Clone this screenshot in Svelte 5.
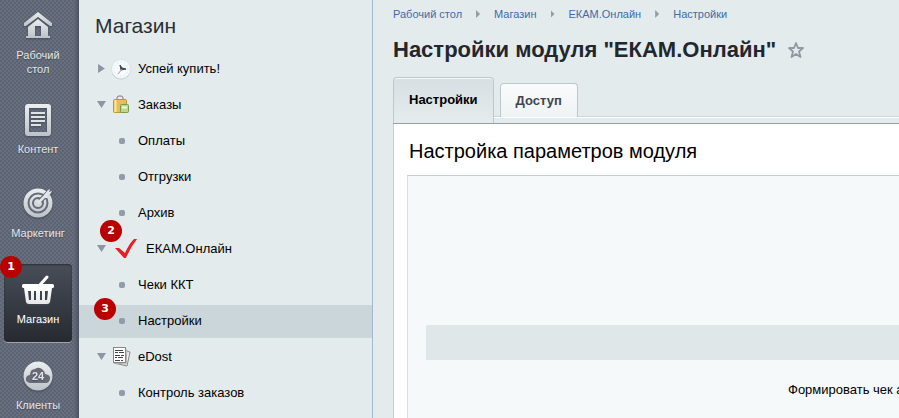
<script lang="ts">
  type NavItem = { label: string; icon: string; badge?: number; tall?: boolean };
  type TreeItem = { label: string; icon?: string; open?: boolean; active?: boolean; badge?: number };

  const nav: NavItem[] = [
    { label: 'Рабочий стол', icon: 'home', tall: true },
    { label: 'Контент', icon: 'content' },
    { label: 'Маркетинг', icon: 'target' },
    { label: 'Магазин', icon: 'basket', badge: 1 },
    { label: 'Клиенты', icon: 'cloud' }
  ];

  const tree: TreeItem[] = [
    { label: 'Успей купить!', icon: 'clock', open: false },
    { label: 'Заказы', icon: 'bags', open: true },
    { label: 'Оплаты' },
    { label: 'Отгрузки' },
    { label: 'Архив' },
    { label: 'ЕКАМ.Онлайн', icon: 'check', open: true, badge: 2 },
    { label: 'Чеки ККТ' },
    { label: 'Настройки', active: true, badge: 3 },
    { label: 'eDost', icon: 'papers', open: true },
    { label: 'Контроль заказов' }
  ];

  const crumbs = ['Рабочий стол', 'Магазин', 'ЕКАМ.Онлайн', 'Настройки'];
  const tabs = ['Настройки', 'Доступ'];

  let section = $state('Магазин');
  let tab = $state('Настройки');
</script>

<div class="page">
  <nav class="rail">
    {#each nav as item}
      <button
        type="button"
        class="rail-item"
        class:tall={item.tall}
        class:active={section === item.label}
        onclick={() => (section = item.label)}
      >
        <svg class="rail-icon" viewBox="0 0 36 36" aria-hidden="true">
          <defs>
            <linearGradient id="metal-{item.icon}" x1="0" y1="0" x2="0" y2="1">
              <stop offset="0" stop-color={item.icon === 'basket' ? '#ffffff' : '#eceff0'} />
              <stop offset="1" stop-color={item.icon === 'basket' ? '#e4e6e8' : '#bcc2c7'} />
            </linearGradient>
          </defs>
          {#if item.icon === 'home'}
            <g fill="url(#metal-home)">
              <path d="M18 4 L32 15 V18 H30 L18 9 L6 18 H4 V15 Z" />
              <path d="M18 11 L28 19 V28 H30 V30 H6 V28 H8 V19 Z M15 18 V28 H21 V18 Z" fill-rule="evenodd" />
            </g>
          {:else if item.icon === 'content'}
            <path
              fill="url(#metal-content)"
              fill-rule="evenodd"
              d="M8 2 H28 Q31 2 31 5 V31 Q31 34 28 34 H8 Q5 34 5 31 V5 Q5 2 8 2 Z M9 6 V30 H27 V6 Z"
            />
            <path d="M11 11 H25 M11 15 H25 M11 19 H25 M11 23 H21" stroke="#dfe3e5" stroke-width="2" />
          {:else if item.icon === 'target'}
            <circle cx="18" cy="17" r="14.500" fill="url(#metal-target)" />
            <g fill="none" stroke="#656b79" stroke-width="2">
              <circle cx="18" cy="17" r="9.500" />
              <circle cx="18" cy="17" r="5" />
            </g>
            <path d="M20 15 L31 4" stroke="#656b79" stroke-width="5" />
            <path d="M18 17 L29 6" stroke="#e2e5e7" stroke-width="2.500" />
            <path d="M24 9 L28 4 L30 3 L29 6 L32 5 L31 7 L27 12 L24 12 Z" fill="#e2e5e7" />
          {:else if item.icon === 'basket'}
            <path d="M19 14 L27 5" stroke="#fff" stroke-width="3" stroke-linecap="round" />
            <rect x="2" y="12" width="32" height="4" rx="1.500" fill="#fff" />
            <path
              fill="url(#metal-basket)"
              fill-rule="evenodd"
              d="M4 16 H32 L30 30 Q29.500 32 27 32 H9 Q6.500 32 6 30 Z M8 19 L9 28 H11 V19 Z M14 19 V28 H16 V19 Z M20 19 V28 H22 V19 Z M25 19 V28 H27 L28 19 Z"
            />
          {:else}
            <circle cx="18" cy="18" r="14.500" fill="url(#metal-cloud)" />
            <path
              d="M10 25 Q5 24 6 20 Q7 17 10 17 Q10 11 15 11 Q19 8 23 12 Q25 14 25 16 Q31 17 30 21 Q29 25 26 25 Z"
              fill="#666b77"
            />
            <text x="18" y="22" text-anchor="middle" class="cloud-text">24</text>
          {/if}
        </svg>
        <span class="rail-label">{item.label}</span>
        {#if item.badge}<span class="badge rail-badge">{item.badge}</span>{/if}
      </button>
    {/each}
  </nav>

  <aside class="menu">
    <h2>Магазин</h2>
    <ul>
      {#each tree as item}
        <li class:active={item.active} class:check={item.icon === 'check'}>
          {#if item.icon}
            <button type="button" class="toggle" class:open={item.open} aria-label={item.label}></button>
            <svg class="tree-icon" viewBox="0 0 24 24" aria-hidden="true">
              {#if item.icon === 'clock'}
                <circle cx="12" cy="13" r="9.500" fill="#b5cbd5" />
                <circle cx="12" cy="12" r="9.500" fill="#f8fbfc" stroke="#d8e4e9" />
                <circle cx="12" cy="12" r="7" fill="none" stroke="#c8d7df" stroke-dasharray="1 2.600" />
                <path d="M17 12 L12 13 L11 8 L13 11 Z" fill="#34464f" stroke="#34464f" />
                <path d="M13 12 L9 17" stroke="#be8d8d" />
              {:else if item.icon === 'bags'}
                <path d="M8 8 V5 Q8 3 10 3 H12 Q14 3 14 5 V8" fill="none" stroke="#84796a" />
                <rect x="4.500" y="6.500" width="13" height="13" rx="1" fill="#e9bd56" stroke="#c4943a" />
                <path d="M6.500 7 V19" stroke="#f9e6a6" stroke-width="2" />
                <rect x="11.500" y="11.500" width="8" height="8" rx="1" fill="#bed68b" stroke="#779a4d" />
                <path d="M13 14.500 H18" stroke="#f3f8df" stroke-width="2" />
              {:else if item.icon === 'check'}
                <path d="M1 11 H5 L11 16 Q15 7 20 2 H23 Q16 11 12 21 H10 Z" fill="#ed1c24" />
              {:else}
                <path d="M8 4 L21 7 L18 21 L5 18 Z" fill="#f2f2f2" stroke="#888" />
                <path d="M7 3 L18 5 L17 19 L5 18 Z" fill="#fff" stroke="#aaa" />
                <rect x="4.500" y="2.500" width="12" height="15" fill="#fff" stroke="#888" />
                <path
                  d="M6 5.500 H14 M6 7.500 H9 M10 7.500 H15 M6 10.500 H11 M12 10.500 H15 M6 12.500 H8 M9 12.500 H14 M6 15.500 H11 M12 15.500 H14"
                  stroke="#444"
                />
              {/if}
            </svg>
          {:else}
            <span class="dot"></span>
          {/if}
          <a href="#menu">{item.label}</a>
          {#if item.badge}<span class="badge tree-badge">{item.badge}</span>{/if}
        </li>
      {/each}
    </ul>
  </aside>

  <main>
    <nav class="crumbs">
      {#each crumbs as crumb, i}
        {#if i > 0}<span class="crumb-arrow"></span>{/if}
        <a href="#crumb">{crumb}</a>
      {/each}
    </nav>

    <div class="title">
      <h1>Настройки модуля "ЕКАМ.Онлайн"</h1>
      <button type="button" class="star" aria-label="В избранное">
        <svg viewBox="0 0 18 18">
          <path
            d="M9 2 L11 7 L16 7 L12 10.500 L13.500 16 L9 13 L4.500 16 L6 10.500 L2 7 L7 7 Z"
            fill="none"
            stroke="#9199a6"
            stroke-width="1.800"
            stroke-linejoin="round"
          />
        </svg>
      </button>
    </div>

    <div class="tabs" role="tablist">
      {#each tabs as name}
        <button
          type="button"
          role="tab"
          class="tab"
          class:selected={tab === name}
          aria-selected={tab === name}
          onclick={() => (tab = name)}>{name}</button
        >
      {/each}
    </div>

    <section class="panel">
      <h3>Настройка параметров модуля</h3>
      <div class="options">
        <div class="group"></div>
        <div class="option">Формировать чек а</div>
      </div>
    </section>
  </main>
</div>

<style>
  :global(body) {
    margin: 0;
    overflow: hidden;
  }

  .page {
    display: flex;
    height: 100vh;
    overflow: hidden;
    background: #e3ebed;
    color: #000;
    font-family: 'Liberation Sans', Arial, sans-serif;
    font-size: 13px;
  }

  button {
    margin: 0;
    padding: 0;
    border: none;
    background: none;
    font: inherit;
    cursor: pointer;
  }

  a {
    color: inherit;
    text-decoration: none;
  }

  h1,
  h2,
  h3,
  ul {
    margin: 0;
    padding: 0;
  }

  .rail {
    display: flex;
    flex-direction: column;
    flex: 0 0 79px;
    box-sizing: border-box;
    padding: 0 7px 0 4px;
    gap: 6px;
    background-color: #687080;
    background-image:
      linear-gradient(to right, transparent 74px, #4c5262 79px),
      radial-gradient(circle at 1px 1px, #5c6372 1px, transparent 1px),
      radial-gradient(circle at 3px 3px, #5c6372 1px, transparent 1px);
    background-size: 100% 100%, 4px 4px, 4px 4px;
  }

  .rail-item {
    position: relative;
    display: flex;
    flex-direction: column;
    align-items: center;
    flex-shrink: 0;
    gap: 4px;
    box-sizing: border-box;
    padding: 8px 4px 16px;
    border-radius: 4px;
    color: #e4e7ea;
    font-size: 11px;
    line-height: 14px;
    text-shadow: 0 1px 1px #444955;
  }

  .rail-item.tall {
    padding-bottom: 12px;
  }

  .rail-item.active {
    margin: 2px 0;
    background: linear-gradient(#484d59, #272a30);
    box-shadow: inset 0 1px 2px #292d36, 0 1px 0 #a0a4ac;
    color: #fff;
  }

  .rail-icon {
    width: 36px;
    height: 36px;
    filter: drop-shadow(0 1px 1px #424855);
  }

  .cloud-text {
    fill: #e3e5e7;
    font-size: 11px;
    font-weight: bold;
  }

  .badge {
    position: absolute;
    width: 22px;
    height: 22px;
    border-radius: 50%;
    background: #b90000;
    color: #fff;
    font: bold 11px/22px 'DejaVu Sans', sans-serif;
    text-align: center;
    text-shadow: none;
  }

  .rail-badge {
    top: -8px;
    left: -4px;
  }

  .menu {
    flex: 0 0 293px;
    border-right: 1px solid #a0b9ce;
  }

  h2 {
    padding: 13px 16px 14px;
    color: #2b2f35;
    font-size: 21px;
    font-weight: normal;
    line-height: 26px;
  }

  ul {
    display: flex;
    flex-direction: column;
    gap: 3px;
    list-style: none;
  }

  li {
    position: relative;
    display: flex;
    align-items: center;
    box-sizing: border-box;
    height: 33px;
    padding: 0 0 2px 18px;
  }

  li.active {
    background: #cbd6db;
  }

  .toggle {
    width: 9px;
    height: 9px;
    background: #8b95a5;
    clip-path: polygon(12% 0, 88% 50%, 12% 100%);
  }

  .toggle.open {
    clip-path: polygon(0 12%, 100% 12%, 50% 88%);
  }

  .tree-icon {
    width: 24px;
    height: 24px;
    margin: 0 5px 0 3px;
  }

  .check .tree-icon {
    margin: 0 8px;
  }

  .dot {
    width: 6px;
    height: 6px;
    margin: 0 13px 0 22px;
    border-radius: 2px;
    background: #929baa;
  }

  .tree-badge {
    top: -7px;
    left: 15px;
  }

  .check .tree-badge {
    top: -13px;
    left: 21px;
  }

  main {
    flex: 1;
    min-width: 0;
    padding-left: 20px;
  }

  .crumbs {
    display: flex;
    align-items: center;
    height: 28px;
    color: #3f6ba5;
    font-size: 11px;
  }

  .crumb-arrow {
    width: 4px;
    height: 8px;
    margin: 0 14px;
    background: #929da5;
    clip-path: polygon(0 0, 100% 50%, 0 100%);
  }

  .title {
    display: flex;
    align-items: center;
    gap: 11px;
    height: 44px;
  }

  h1 {
    color: #23272d;
    font-size: 22px;
    line-height: 28px;
    white-space: nowrap;
  }

  .star {
    width: 18px;
    height: 18px;
  }

  .star svg {
    display: block;
  }

  .tabs {
    display: flex;
    align-items: flex-end;
    gap: 6px;
    height: 46px;
    padding-top: 5px;
    border-bottom: 1px solid #969fa3;
    background: linear-gradient(#ccd5d7, #ccd5d7) 0 44px / 100% 1px no-repeat,
      linear-gradient(#fff, #fff) 0 45px / 100% 1px no-repeat;
  }

  .tab {
    height: 34px;
    margin-bottom: 6px;
    padding: 0 15px;
    box-sizing: border-box;
    border: 1px solid #bdc8cb;
    border-bottom: none;
    border-radius: 4px 4px 0 0;
    background: linear-gradient(#fafcfc, #eff3f4);
    color: #3f4650;
    font-weight: bold;
  }

  .tab.selected {
    height: 46px;
    margin-bottom: 0;
    padding-bottom: 2px;
    background: linear-gradient(#d6dfe2, #e5ecee);
    box-shadow: inset 0 1px 0 #f5f9fa;
    color: #000;
  }

  .panel {
    min-height: 294px;
    padding: 13px 0 0 13px;
    border-left: 1px solid #c5d0d4;
    background: #fff;
  }

  h3 {
    margin-bottom: 10px;
    padding-left: 2px;
    font-size: 20px;
    font-weight: normal;
    line-height: 28px;
    white-space: nowrap;
  }

  .options {
    min-height: 300px;
    padding: 149px 0 0 18px;
    border-top: 1px solid #c3cdd1;
    border-left: 1px solid #d5e2e5;
    background: #f5f9fa;
  }

  .group {
    height: 35px;
    background: #dfe7e8;
  }

  .option {
    padding: 21px 0 0 362px;
    line-height: 18px;
    white-space: nowrap;
  }
</style>
